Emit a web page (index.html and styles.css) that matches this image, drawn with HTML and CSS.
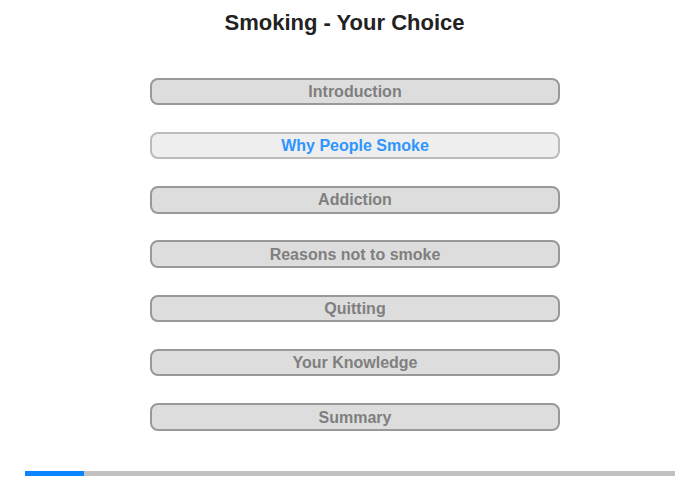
FILE: index.html
```html
<!DOCTYPE html>
<html lang="en">
<head>
    <meta charset="UTF-8">
    <meta name="viewport" content="width=device-width, initial-scale=1.0">
    <title>Smoking - Your Choice</title>
    <link rel="stylesheet" href="styles.css">
</head>
<body>
    <div class="page">
        <h1 class="title">Smoking - Your Choice</h1>
        <div class="menu">
            <button class="menu-btn">Introduction</button>
            <button class="menu-btn active">Why People Smoke</button>
            <button class="menu-btn">Addiction</button>
            <button class="menu-btn">Reasons not to smoke</button>
            <button class="menu-btn">Quitting</button>
            <button class="menu-btn">Your Knowledge</button>
            <button class="menu-btn">Summary</button>
        </div>
        <div class="progress">
            <div class="progress-fill" style="width: 9.1%"></div>
        </div>
    </div>
</body>
</html>
```
FILE: styles.css
```css
body {
    margin: 0;
    background-color: #ffffff;
    font-family: 'Liberation Sans', Arial, sans-serif;
}
.page {
    height: 480px;
    display: flex;
    flex-direction: column;
}
.title {
    margin: 0;
    padding: 10px 11px 0 0;
    font-size: 22px;
    line-height: 26px;
    font-weight: bold;
    color: #222222;
    text-align: center;
}
.menu {
    margin-top: 41.5px;
    padding-left: 10px;
    display: flex;
    flex-direction: column;
    align-items: center;
    gap: 26.8px;
}
.menu-btn {
    box-sizing: border-box;
    width: 410px;
    height: 27.5px;
    padding: 1px 0 0 0;
    font-family: 'Liberation Sans', Arial, sans-serif;
    font-size: 16px;
    font-weight: bold;
    color: #7f7f7f;
    background-color: #dddddd;
    border: 2px solid #999999;
    border-radius: 8px;
    cursor: pointer;
}
.menu-btn.active {
    color: #2f95ff;
    background-color: #eeeeee;
    border-color: #bbbbbb;
}
.progress {
    margin: auto 25px 4px 25px;
    height: 5px;
    background-color: #c2c2c2;
}
.progress-fill {
    height: 100%;
    background-color: #0a84ff;
}
```
